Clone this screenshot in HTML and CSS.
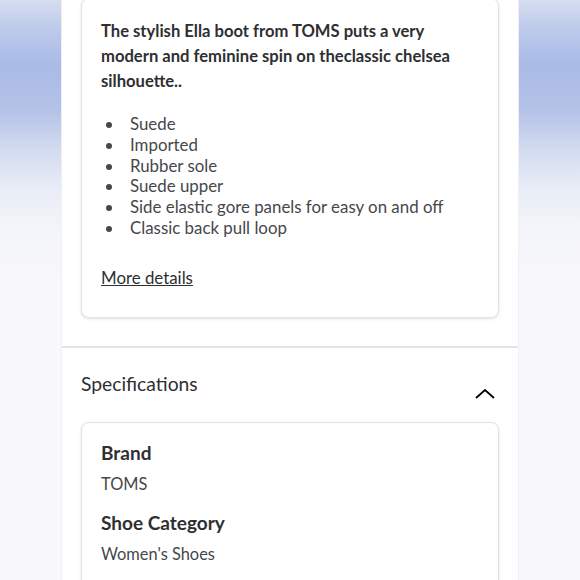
FILE: index.html
```html
<!DOCTYPE html>
<html lang="en">
<head>
<meta charset="utf-8">
<title>Product details</title>
<link rel="stylesheet" href="styles.css">
</head>
<body>
<main class="column">
  <section class="card about">
    <p class="lead">The stylish Ella boot from TOMS puts a very modern and feminine spin on theclassic chelsea silhouette..</p>
    <ul class="features">
      <li>Suede</li>
      <li>Imported</li>
      <li>Rubber sole</li>
      <li>Suede upper</li>
      <li>Side elastic gore panels for easy on and off</li>
      <li>Classic back pull loop</li>
    </ul>
    <a class="more" href="#">More details</a>
  </section>
  <hr class="divider">
  <section class="specs">
    <div class="specs-head">
      <h2 class="specs-title">Specifications</h2>
      <svg class="chevron" width="20" height="10" viewBox="0 0 20 10" aria-hidden="true">
        <polyline points="1,9 10,1 19,9" fill="none" stroke="#000" stroke-width="1.8" stroke-linejoin="miter"/>
      </svg>
    </div>
    <div class="card spec-card">
      <h3 class="spec-label">Brand</h3>
      <p class="spec-value">TOMS</p>
      <h3 class="spec-label">Shoe Category</h3>
      <p class="spec-value">Women's Shoes</p>
    </div>
  </section>
</main>
</body>
</html>
```

FILE: styles.css
```css
html, body {
  margin: 0;
  padding: 0;
  height: 100%;
}

body {
  font-family: Lato, "Noto Sans", sans-serif;
  color: #2e2f32;
  background: linear-gradient(to bottom,
    #d6ddf0 0px,
    #c0cceb 25px,
    #a9bae6 65px,
    #b4c2e8 110px,
    #d3dbf0 150px,
    #e9edf7 190px,
    #f4f5fa 230px,
    #f8f8fa 280px,
    #f8f8fa 100%);
  overflow: hidden;
}

.column {
  width: 456px;
  margin: 0 auto;
  background: #fff;
  min-height: 100%;
  box-shadow: -1px 0 0 #eef0f4, 1px 0 0 #eef0f4;
  overflow: hidden;
}

.card {
  margin: 0 19px;
  background: #fff;
  border: 1px solid #e2e3e5;
  border-radius: 8px;
  box-shadow: 0 1px 3px rgba(0, 0, 0, 0.12);
}

.about {
  margin-top: -2px;
  padding: 20px 19px 28px;
}

.lead {
  margin: 0;
  font-size: 16.6px;
  font-weight: 700;
  line-height: 25px;
  color: #2e2f32;
}

.features {
  margin: 20px 0 0;
  padding-left: 23px;
  font-size: 16.85px;
  line-height: 20.8px;
  color: #46474a;
}

.features li {
  padding-left: 6px;
}

.more {
  display: block;
  margin-top: 29px;
  font-size: 16.85px;
  line-height: 20.8px;
  color: #2e2f32;
  text-decoration: underline;
  text-underline-offset: 1px;
}

.divider {
  margin: 28px 0 0;
  border: 0;
  border-top: 2px solid #e4e4e6;
  height: 0;
}

.specs-head {
  display: flex;
  justify-content: space-between;
  align-items: flex-start;
  padding: 22px 23px 0 19px;
}

.specs-title {
  margin: 0;
  font-size: 19.3px;
  font-weight: 400;
  line-height: 28px;
  color: #2e2f32;
}

.chevron {
  display: block;
  margin-top: 19px;
}

.spec-card {
  margin-top: 23px;
  padding: 18px 19px 30px;
}

.spec-label {
  margin: 15px 0 0;
  font-size: 19px;
  font-weight: 700;
  line-height: 24px;
  color: #2e2f32;
}

.spec-label:first-child {
  margin-top: 0;
}

.spec-value {
  margin: 7px 0 0;
  font-size: 16.4px;
  line-height: 24px;
  color: #46474a;
}
```
